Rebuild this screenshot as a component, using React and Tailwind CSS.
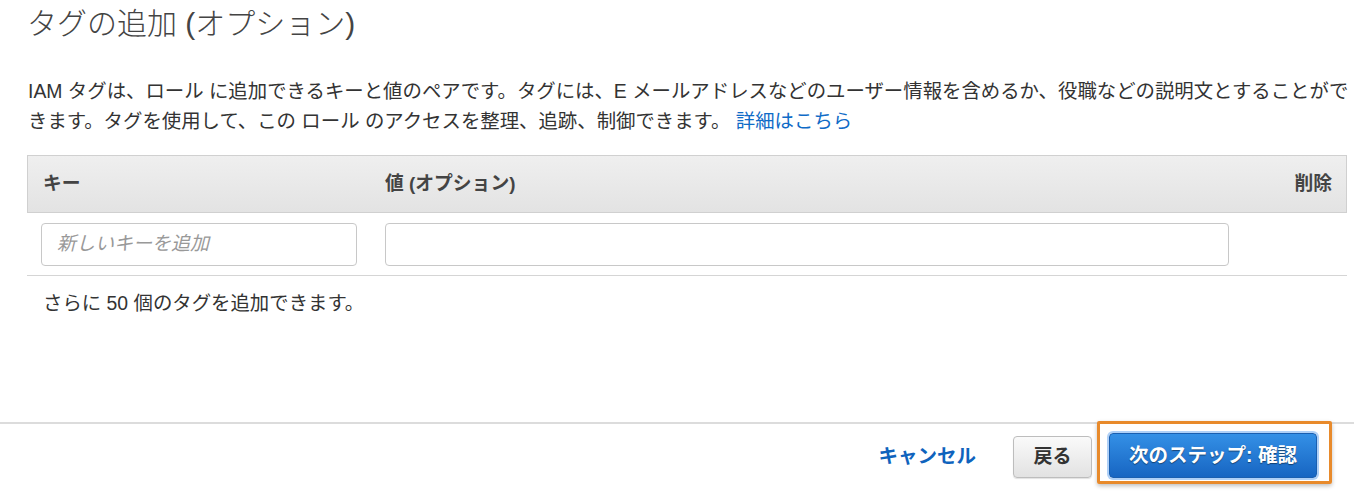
export default function App() {
  const font = { fontFamily: '"Liberation Sans", "Noto Sans CJK JP", sans-serif' };
  return (
    <div className="w-[1354px] h-[495px] bg-white text-[#444] overflow-hidden" style={font}>
      <div className="pl-[27px] pr-[7px]">
        <h1 className="text-[30px] leading-[48px] font-light text-[#444]">タグの追加 (オプション)</h1>
        <p className="mt-[28px] text-[19.4px] leading-[30px] text-[#333] pl-px whitespace-nowrap">
          IAM タグは、ロール に追加できるキーと値のペアです。タグには、E メールアドレスなどのユーザー情報を含めるか、役職などの説明文とすることがで
          <br />
          きます。タグを使用して、この ロール のアクセスを整理、追跡、制御できます。{' '}
          <a className="text-[#0f6bc7]" href="#">詳細はこちら</a>
        </p>

        <div className="mt-[19px]">
          <div className="grid grid-cols-[344px_1fr_104px] h-[58px] items-center border border-[#d0d0d0] bg-gradient-to-b from-[#efefef] to-[#e3e3e3] text-[18.8px] font-bold text-[#444]">
            <div className="pl-[15px]">キー</div>
            <div className="pl-[13px]">値 (オプション)</div>
            <div className="pr-[14px] text-right">削除</div>
          </div>
          <div className="grid grid-cols-[344px_1fr_104px] pt-[10px] pb-[9px] border-b border-[#d5d5d5]">
            <div className="pl-[14px] pr-[14px]">
              <div className="h-[43px] w-[316px] rounded-[4px] border border-[#c8c8c8] bg-white flex items-center pl-[15px] text-[19px] italic text-[#999]">
                新しいキーを追加
              </div>
            </div>
            <div className="pl-[14px] pr-[14px]">
              <div className="h-[43px] rounded-[4px] border border-[#c8c8c8] bg-white" />
            </div>
            <div />
          </div>
          <div className="mt-[14px] pl-[16px] text-[19.4px] leading-[26px] text-[#333]">さらに 50 個のタグを追加できます。</div>
        </div>
      </div>

      <div className="mt-[106px] border-t-2 border-[#dcdcdc]">
        <div className="flex justify-end items-end pr-[37px] pt-[9px] gap-[17px]">
          <button className="h-[42px] px-[2px] mr-[18px] text-[19.5px] font-bold text-[#0f63bd]">キャンセル</button>
          <button className="h-[42px] w-[79px] rounded-[4px] border border-[#bdbdbd] bg-gradient-to-b from-[#fafafa] to-[#e2e2e2] text-[19px] font-bold text-[#333] shadow-[0_1px_1px_rgba(0,0,0,0.12)]">
            戻る
          </button>
          <div className="relative">
            <span className="absolute -top-[12px] -left-[12px] -right-[15px] -bottom-[6px] border-[3px] border-[#e88a2b] rounded-[2px] shadow-[0_2px_4px_rgba(0,0,0,0.25)]" />
            <button
              className="relative h-[45px] w-[208px] rounded-[4px] border border-[#1a5fb0] bg-gradient-to-b from-[#3490e6] to-[#1765c2] text-[19.5px] font-bold text-white shadow-[0_0_0_2px_rgba(110,170,240,0.55)] [text-shadow:0_1px_1px_rgba(0,0,0,0.45)]"
            >
              次のステップ: 確認
            </button>
          </div>
        </div>
      </div>
    </div>
  );
}
